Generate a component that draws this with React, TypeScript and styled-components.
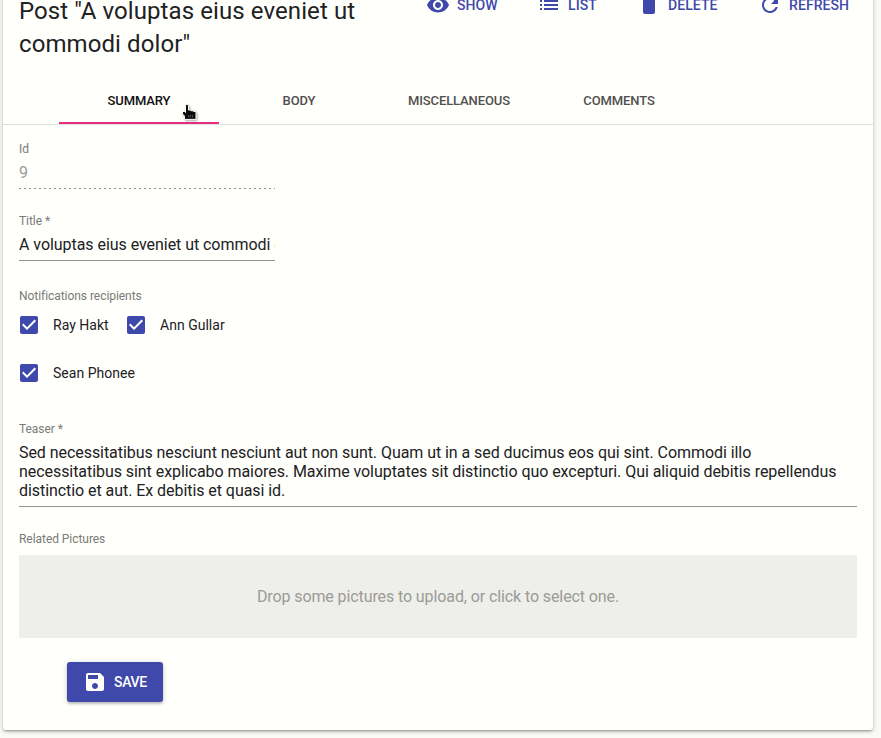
import React from "react";
import styled, { createGlobalStyle } from "styled-components";

const indigo = "#3f48ab";
const ink = "#21211f";

const GlobalStyle = createGlobalStyle`
  * { box-sizing: border-box; }
  body { margin: 0; background: #f9faf5; font-family: Roboto, sans-serif; color: ${ink}; }
`;

const Page = styled.div`
  height: 738px;
  overflow: hidden;
  padding: 0 8px 8px 3px;
`;

const Card = styled.main`
  position: relative;
  width: 870px;
  height: 770px;
  margin-top: -40px;
  padding-top: 34px;
  background: #fffffb;
  border-radius: 3px;
  box-shadow: 0 1px 5px rgba(0, 0, 0, 0.2), 0 2px 2px rgba(0, 0, 0, 0.14), 0 3px 1px -2px rgba(0, 0, 0, 0.12);
`;

const Header = styled.header`
  display: flex;
  justify-content: space-between;
  height: 83px;
  padding: 0 24px 0 16px;
`;

const Title = styled.h1`
  width: 380px;
  margin: 1px 0 0;
  font-size: 24px;
  font-weight: 400;
  line-height: 33px;
  letter-spacing: 0.09px;
`;

const Actions = styled.nav`
  display: flex;
  gap: 40px;
  height: 24px;
  margin-top: -1px;
`;

const Action = styled.button<{ $w: number }>`
  display: flex;
  align-items: center;
  gap: 7px;
  width: ${(p) => p.$w}px;
  padding: 0;
  border: 0;
  background: none;
  color: ${indigo};
  font: 500 14px/24px Roboto, sans-serif;
  letter-spacing: 0.08px;
  white-space: nowrap;
`;

const Icon = styled.svg`
  width: 24px;
  height: 24px;
  flex: none;
  fill: currentColor;
`;

const Tabs = styled.div`
  display: flex;
  height: 48px;
  padding-left: 56px;
  border-bottom: 1px solid #dde0dc;
`;

const Tab = styled.button<{ $active?: boolean }>`
  width: 160px;
  height: 47px;
  padding: 2px 0 0;
  border: 0;
  border-bottom: 2px solid ${(p) => (p.$active ? "#e92d80" : "transparent")};
  background: none;
  color: ${(p) => (p.$active ? "#111" : "#50504e")};
  font: 500 13px/20px Roboto, sans-serif;
  letter-spacing: -0.12px;
`;

const Form = styled.form`
  padding: 16px 16px 0;
`;

const Field = styled.div<{ $h: number; $narrow?: boolean }>`
  height: ${(p) => p.$h}px;
  width: ${(p) => (p.$narrow ? "256px" : "auto")};
`;

const Label = styled.label`
  display: block;
  height: 16px;
  color: #7a7a77;
  font-size: 12px;
  line-height: 16px;
  letter-spacing: -0.05px;
`;

const Value = styled.div<{ $disabled?: boolean }>`
  height: 31px;
  padding-top: 6px;
  overflow: hidden;
  white-space: nowrap;
  font-size: 16px;
  line-height: 19px;
  letter-spacing: -0.05px;
  color: ${(p) => (p.$disabled ? "#9b9b98" : ink)};
`;

const Rule = styled.div`
  height: 1px;
  background: #92928f;
`;

const DottedRule = styled.div`
  height: 1px;
  background: repeating-linear-gradient(90deg, #8d8d8a 0 2px, transparent 2px 5px);
`;

const Choices = styled.div`
  display: grid;
  grid-template-columns: 107px 110px;
  grid-auto-rows: 48px;
  align-items: center;
  margin-top: -3px;
`;

const Choice = styled.label`
  display: flex;
  align-items: center;
  gap: 12px;
  margin-left: -2px;
  font-size: 14px;
  line-height: 20px;
  letter-spacing: 0.02px;
  white-space: nowrap;
`;

const CheckIcon = styled(Icon)`
  color: ${indigo};
`;

const Teaser = styled.div`
  height: 69px;
  padding: 6px 6px 0 0;
  font-size: 16px;
  line-height: 19px;
  letter-spacing: -0.058px;
`;

const DropZone = styled.div`
  display: flex;
  align-items: center;
  justify-content: center;
  height: 83px;
  background: #eeeeea;
  color: #9b9b98;
  font-size: 16px;
  letter-spacing: -0.1px;
`;

const Save = styled.button`
  display: flex;
  align-items: center;
  gap: 7px;
  width: 96px;
  height: 40px;
  margin: 24px 0 0 48px;
  padding: 0 16px;
  border: 0;
  border-radius: 3px;
  background: ${indigo};
  color: #fffffb;
  font: 500 14px Roboto, sans-serif;
  letter-spacing: -0.3px;
  box-shadow: 0 1px 5px rgba(0, 0, 0, 0.2), 0 2px 2px rgba(0, 0, 0, 0.14);
`;

const Pointer = styled.svg`
  position: absolute;
  left: 178px;
  top: 143px;
  width: 18px;
  height: 18px;
  filter: drop-shadow(1px 1px 1px rgba(0, 0, 0, 0.35));
`;

const actions = [
  { text: "SHOW", w: 71, d: "M12 4.5C7 4.5 2.73 7.61 1 12c1.73 4.39 6 7.5 11 7.5s9.27-3.11 11-7.5c-1.73-4.39-6-7.5-11-7.5zM12 17c-2.76 0-5-2.24-5-5s2.24-5 5-5 5 2.24 5 5-2.24 5-5 5zm0-8c-1.66 0-3 1.34-3 3s1.34 3 3 3 3-1.34 3-3-1.34-3-3-3z" },
  { text: "LIST", w: 60, d: "M3 13h2v-2H3v2zm0 4h2v-2H3v2zm0-8h2V7H3v2zm4 4h14v-2H7v2zm0 4h14v-2H7v2zM7 7v2h14V7H7z" },
  { text: "DELETE", w: 81, d: "M6 19c0 1.1.9 2 2 2h8c1.1 0 2-.9 2-2V7H6v12zM19 4h-3.5l-1-1h-5l-1 1H5v2h14V4z" },
  { text: "REFRESH", w: 91, d: "M17.65 6.35C16.2 4.9 14.21 4 12 4c-4.42 0-7.99 3.58-7.99 8s3.57 8 7.99 8c3.73 0 6.84-2.55 7.73-6h-2.08c-.82 2.33-3.04 4-5.65 4-3.31 0-6-2.69-6-6s2.69-6 6-6c1.66 0 3.14.69 4.22 1.78L13 11h7V4l-2.35 2.35z" },
];

const tabs = ["SUMMARY", "BODY", "MISCELLANEOUS", "COMMENTS"];
const recipients = ["Ray Hakt", "Ann Gullar", "Sean Phonee"];

export default function App() {
  return (
    <Page>
      <GlobalStyle />
      <Card>
        <Header>
          <Title>Post "A voluptas eius eveniet ut commodi dolor"</Title>
          <Actions>
            {actions.map((a) => (
              <Action key={a.text} $w={a.w}>
                <Icon viewBox="0 0 24 24"><path d={a.d} /></Icon>
                {a.text}
              </Action>
            ))}
          </Actions>
        </Header>
        <Tabs>
          {tabs.map((t, i) => (
            <Tab key={t} $active={i === 0}>{t}</Tab>
          ))}
        </Tabs>
        <Form>
          <Field $h={72} $narrow>
            <Label>Id</Label>
            <Value $disabled>9</Value>
            <DottedRule />
          </Field>
          <Field $h={75} $narrow>
            <Label>Title *</Label>
            <Value>A voluptas eius eveniet ut commodi dolor</Value>
            <Rule />
          </Field>
          <Field $h={133}>
            <Label>Notifications recipients</Label>
            <Choices>
              {recipients.map((r) => (
                <Choice key={r}>
                  <CheckIcon viewBox="0 0 24 24">
                    <path d="M19 3H5c-1.11 0-2 .9-2 2v14c0 1.1.89 2 2 2h14c1.11 0 2-.9 2-2V5c0-1.1-.89-2-2-2zm-9 14l-5-5 1.41-1.41L10 14.17l7.59-7.59L19 8l-9 9z" />
                  </CheckIcon>
                  {r}
                </Choice>
              ))}
            </Choices>
          </Field>
          <Field $h={110}>
            <Label>Teaser *</Label>
            <Teaser>
              Sed necessitatibus nesciunt nesciunt aut non sunt. Quam ut in a sed ducimus eos qui sint. Commodi illo
              necessitatibus sint explicabo maiores. Maxime voluptates sit distinctio quo excepturi. Qui aliquid debitis
              repellendus distinctio et aut. Ex debitis et quasi id.
            </Teaser>
            <Rule />
          </Field>
          <Field $h={24}>
            <Label>Related Pictures</Label>
          </Field>
          <DropZone>Drop some pictures to upload, or click to select one.</DropZone>
          <Save type="button">
            <Icon viewBox="0 0 24 24">
              <path d="M17 3H5c-1.11 0-2 .9-2 2v14c0 1.1.89 2 2 2h14c1.1 0 2-.9 2-2V7l-4-4zm-5 16c-1.66 0-3-1.34-3-3s1.34-3 3-3 3 1.34 3 3-1.34 3-3 3zm3-10H5V5h10v4z" />
            </Icon>
            SAVE
          </Save>
        </Form>
        <Pointer viewBox="0 0 18 18">
          <path d="M4.500 3c0-2 3-2 3 0v4h2l.5.700h2l.5.700h1.500l1 1v7H3.500v-3.500L1.500 11V8.500h2l1 1z" fill="#0b0b0b" stroke="#fff" strokeWidth="1" />
          <path d="M7.500 12v2.500M9.500 12v2.500M11.500 12v2.500" stroke="#777" strokeWidth=".6" />
        </Pointer>
      </Card>
    </Page>
  );
}
